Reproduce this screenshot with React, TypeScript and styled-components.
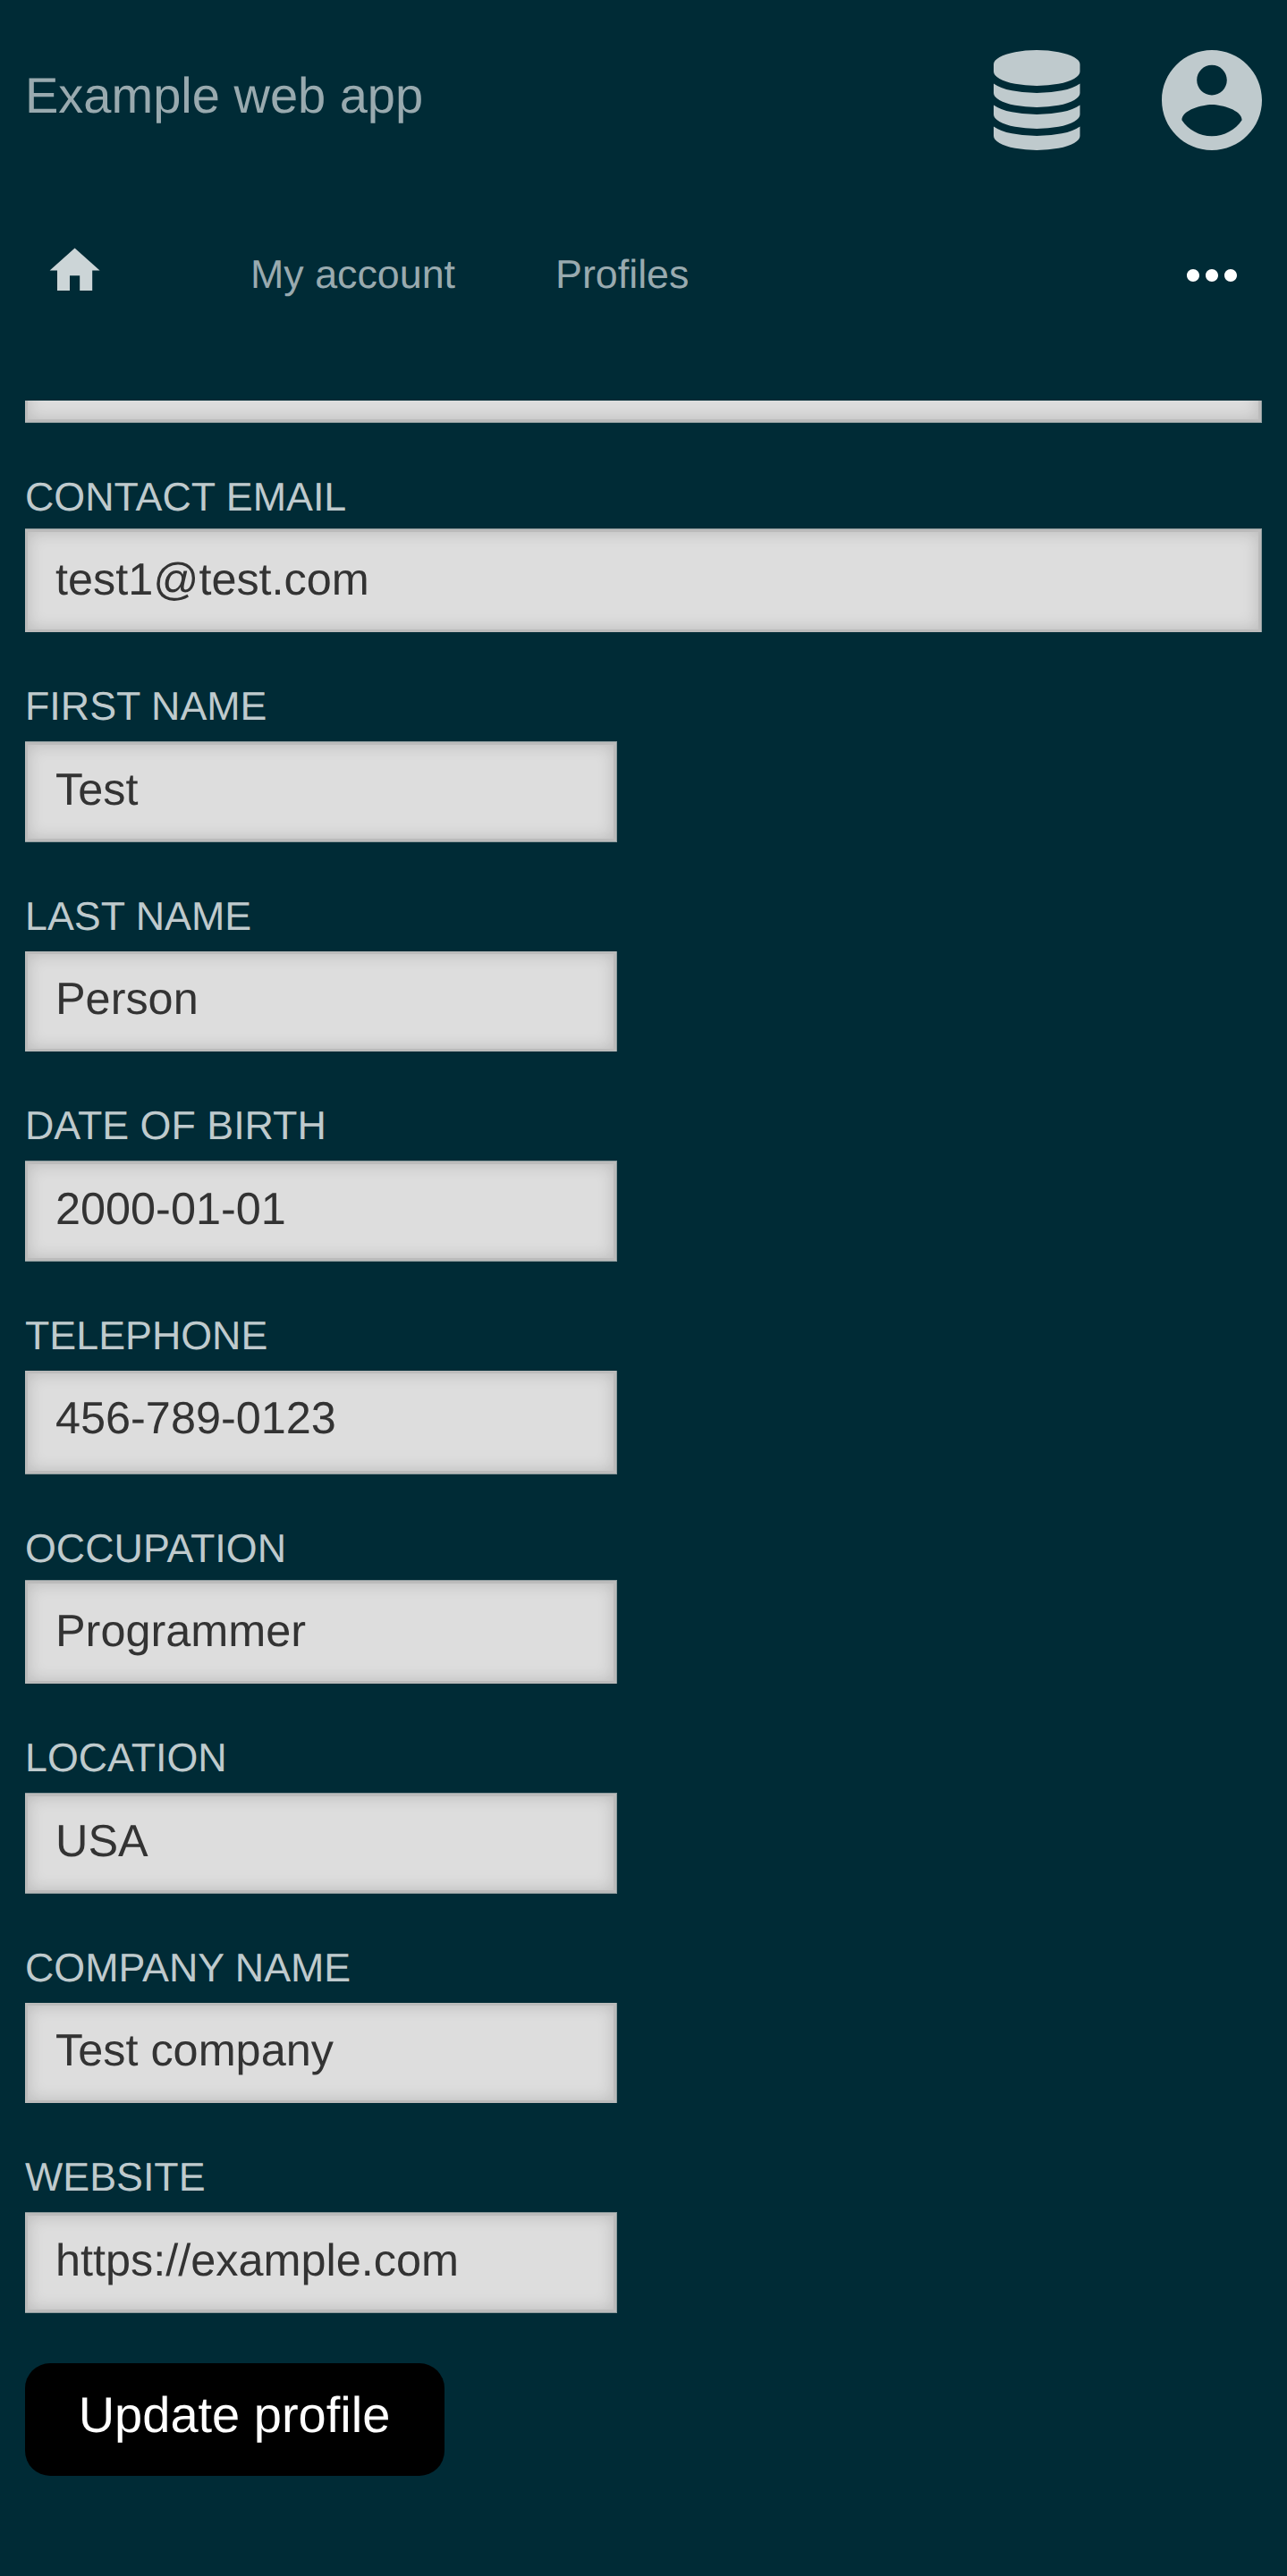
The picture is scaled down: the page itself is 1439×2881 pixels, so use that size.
import React from "react";
import styled, { createGlobalStyle } from "styled-components";
import { MdHome, MdMoreHoriz } from "react-icons/md";

const GlobalStyle = createGlobalStyle`
  * { box-sizing: border-box; }
  html, body { margin: 0; background: #002b36; }
  body {
    font-family: "Liberation Sans", Arial, sans-serif;
    text-rendering: geometricPrecision;
    overflow: hidden;
  }
`;

const Page = styled.div`
  width: 1439px;
  height: 2881px;
  display: flex;
  flex-direction: column;
  background: #002b36;
  overflow: hidden;
`;

const Header = styled.header`
  display: flex;
  align-items: flex-start;
  height: 224px;
  padding: 56px 28px 0;
`;

const Title = styled.div`
  flex: 1;
  margin-top: 19px;
  font-size: 56px;
  line-height: 64px;
  color: #99aaaf;
`;

const HeaderIcons = styled.div`
  display: flex;
  gap: 91.5px;
  color: #bfcacd;
  svg { display: block; fill: currentColor; }
`;

const Nav = styled.nav`
  display: flex;
  align-items: flex-start;
  height: 224px;
  padding: 0 56px;
`;

const HomeLink = styled.a`
  width: 224px;
  padding-top: 45px;
  color: #ccd5d7;
  svg { display: block; margin-left: -5.6px; }
`;

const NavLink = styled.a`
  margin-right: 112px;
  padding-top: 57px;
  font-size: 44.8px;
  line-height: 52px;
  color: #99aaaf;
`;

const MoreButton = styled.div`
  margin: 42px -14px 0 auto;
  color: #fff;
  svg { display: block; }
`;

const Form = styled.form`
  display: flex;
  flex-direction: column;
  align-items: flex-start;
  height: 2433px;
  padding: 0 28px;
  overflow: hidden;
`;

const Field = styled.label<{ $wide?: boolean; $gap: number }>`
  display: flex;
  flex-direction: column;
  gap: ${(p) => p.$gap}px;
  width: ${(p) => (p.$wide ? 1383 : 662)}px;
  margin-top: 57px;
`;

const LabelText = styled.span`
  font-size: 44.8px;
  line-height: 52px;
  color: #bfcacd;
  text-transform: uppercase;
`;

const Frame = styled.span<{ $height: number; $topEdge?: boolean; $bottomEdge?: boolean }>`
  display: flex;
  flex: none;
  width: 100%;
  height: ${(p) => p.$height}px;
  padding: ${(p) => (p.$topEdge ? 1 : 0)}px 1px ${(p) => (p.$bottomEdge ? 1 : 0)}px 0;
  background: #8f9c9e;
`;

const Input = styled.input<{ $top: number; $bottom: number }>`
  flex: 1;
  min-width: 0;
  margin: 0;
  padding: ${(p) => p.$top}px 31px ${(p) => p.$bottom}px;
  border: 3px solid #bbb;
  border-radius: 0;
  outline: none;
  background: #ddd;
  box-shadow: inset 0 0 18px rgba(0, 0, 0, 0.16);
  font: 50.4px/58px "Liberation Sans", Arial, sans-serif;
  text-rendering: geometricPrecision;
  color: #333;
`;

const ClippedField = styled.div`
  width: 1383px;
  height: 25px;
  flex: none;
  display: flex;
  align-items: flex-end;
  overflow: hidden;
`;

const SubmitButton = styled.button`
  width: 469px;
  height: 126px;
  margin: 55.5px 0 0;
  padding: 0 1px 10px 0;
  border: 0;
  border-radius: 28px;
  background: #000;
  font: 56px/64px "Liberation Sans", Arial, sans-serif;
  text-rendering: geometricPrecision;
  color: #fff;
`;

type BoxSpec = {
  value?: string;
  height: number;
  top: number;
  topEdge?: boolean;
  bottomEdge?: boolean;
};

type FieldSpec = BoxSpec & { label: string; gap: number; wide?: boolean };

const LINE = 58;
const BORDER = 3;

const fields: FieldSpec[] = [
  { label: "Contact email", value: "test1@test.com", height: 116, gap: 9, top: 25, topEdge: true, wide: true },
  { label: "First name", value: "Test", height: 113, gap: 13, top: 22, topEdge: true, bottomEdge: true },
  { label: "Last name", value: "Person", height: 112, gap: 13, top: 21 },
  { label: "Date of birth", value: "2000-01-01", height: 113, gap: 13, top: 22, topEdge: true, bottomEdge: true },
  { label: "Telephone", value: "456-789-0123", height: 116, gap: 13, top: 21, bottomEdge: true },
  { label: "Occupation", value: "Programmer", height: 116, gap: 9, top: 25, topEdge: true },
  { label: "Location", value: "USA", height: 113, gap: 13, top: 22, topEdge: true, bottomEdge: true },
  { label: "Company name", value: "Test company", height: 112, gap: 13, top: 21 },
  { label: "Website", value: "https://example.com", height: 113, gap: 13, top: 22, topEdge: true, bottomEdge: true },
];

function TextBox({ value = "", height, top, topEdge, bottomEdge }: BoxSpec) {
  const padTop = top - (topEdge ? 1 : 0);
  const padBottom = height - 2 * BORDER - top - LINE - (bottomEdge ? 1 : 0);
  return (
    <Frame $height={height} $topEdge={topEdge} $bottomEdge={bottomEdge}>
      <Input $top={padTop} $bottom={padBottom} defaultValue={value} />
    </Frame>
  );
}

function DatabaseIcon() {
  return (
    <svg width="96.5" height="112" viewBox="0 0 1536 1792" preserveAspectRatio="none">
      <path d="M768 768q237 0 443-43t325-127v170q0 69-103 128t-280 93.5-385 34.5-385-34.5-280-93.5-103-128v-170q119 84 325 127t443 43zm0 768q237 0 443-43t325-127v170q0 69-103 128t-280 93.5-385 34.5-385-34.5-280-93.5-103-128v-170q119 84 325 127t443 43zm0-384q237 0 443-43t325-127v170q0 69-103 128t-280 93.5-385 34.5-385-34.5-280-93.5-103-128v-170q119 84 325 127t443 43zm0-1152q208 0 385 34.5t280 93.5 103 128v128q0 69-103 128t-280 93.5-385 34.5-385-34.5-280-93.5-103-128v-128q0-69 103-128t280-93.5 385-34.5z" />
    </svg>
  );
}

function AccountIcon() {
  return (
    <svg width="112" height="112" viewBox="2 2 20 20">
      <path d="M12 2C6.48 2 2 6.48 2 12s4.48 10 10 10 10-4.48 10-10S17.52 2 12 2zm0 3c1.66 0 3 1.34 3 3s-1.34 3-3 3-3-1.34-3-3 1.34-3 3-3zm0 14.2c-2.5 0-4.71-1.28-6-3.22.03-1.99 4-3.08 6-3.08 1.99 0 5.97 1.09 6 3.08-1.29 1.94-3.5 3.22-6 3.22z" />
    </svg>
  );
}

export default function App() {
  return (
    <>
      <GlobalStyle />
      <Page>
        <Header>
          <Title>Example web app</Title>
          <HeaderIcons>
            <DatabaseIcon />
            <AccountIcon />
          </HeaderIcons>
        </Header>
        <Nav>
          <HomeLink>
            <MdHome size={67.2} />
          </HomeLink>
          <NavLink>My account</NavLink>
          <NavLink>Profiles</NavLink>
          <MoreButton>
            <MdMoreHoriz size={84} />
          </MoreButton>
        </Nav>
        <Form>
          <ClippedField>
            <TextBox height={116} top={25} bottomEdge />
          </ClippedField>
          {fields.map(({ label, gap, wide, ...box }) => (
            <Field key={label} $wide={wide} $gap={gap}>
              <LabelText>{label}</LabelText>
              <TextBox {...box} />
            </Field>
          ))}
          <SubmitButton type="button">Update profile</SubmitButton>
        </Form>
      </Page>
    </>
  );
}
